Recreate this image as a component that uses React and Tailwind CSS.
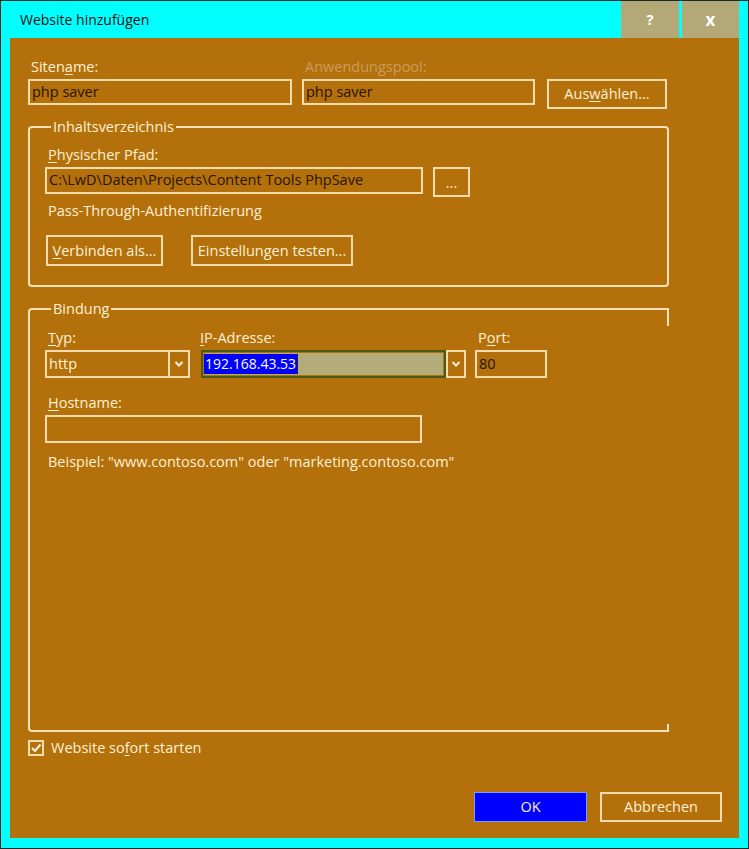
import React from "react";

const font = { fontFamily: '"Open Sans", "Noto Sans", sans-serif' };

function Label({ children, color = "text-[#fff1d6]", className = "" }) {
  return <div className={`h-[21px] pl-[3px] text-[14.5px] leading-[18px] ${color} ${className}`}>{children}</div>;
}

function Input({ value, className = "" }) {
  return (
    <div className={`border-2 border-[#f3dcae] px-[2px] text-[14.5px] leading-[22px] text-[#2a1400] ${className}`}>
      {value}
    </div>
  );
}

function Button({ children, className = "" }) {
  return (
    <div className={`flex items-center justify-center border-2 border-[#f3dcae] text-[14.5px] text-[#fff1d6] ${className}`}>
      {children}
    </div>
  );
}

function Chevron() {
  return (
    <svg width="10" height="8" viewBox="0 0 10 8">
      <polyline points="1.5,2 5,5.5 8.5,2" fill="none" stroke="#fff1d6" strokeWidth="2" />
    </svg>
  );
}

export default function App() {
  return (
    <div style={font} className="w-[749px] h-[849px] border border-[#1e2a2a] bg-[#00ffff] flex flex-col">
      {/* Title bar */}
      <div className="h-[37px] flex items-start justify-between">
        <div className="pl-[19px] pt-[8px] text-[14px] text-[#111]">Website hinzufügen</div>
        <div className="flex gap-[3px] pr-[9px]">
          <div className="w-[58px] h-[37px] bg-[#b3a876] flex items-center justify-center text-white text-[15px] font-bold">?</div>
          <div className="w-[57px] h-[37px] bg-[#b3a876] flex items-center justify-center text-white text-[17px] font-bold">x</div>
        </div>
      </div>

      {/* Content */}
      <div className="mx-[9px] mb-[10px] flex-1 bg-[#b4700a] pl-[18px] pt-[20px] flex flex-col">
        {/* Site name row */}
        <div className="flex items-start">
          <div className="w-[264px]">
            <Label>
              Siten<span className="underline underline-offset-2">a</span>me:
            </Label>
            <Input value="php saver" className="h-[26px]" />
          </div>
          <div className="w-[233px] ml-[10px]">
            <Label color="text-[#c99d5e]">Anwendungspool:</Label>
            <Input value="php saver" className="h-[26px]" />
          </div>
          <Button className="ml-[12px] mt-[21px] w-[120px] h-[30px]">
            Aus<span className="underline underline-offset-2">w</span>ählen...
          </Button>
        </div>

        {/* Inhaltsverzeichnis */}
        <fieldset className="mt-[10px] w-[641px] h-[168px] border-2 border-[#f6e2b8] rounded-[4px] pl-[15px]">
          <legend className="ml-[6px] px-[2px] text-[14.5px] leading-[16px] text-[#fff1d6]">Inhaltsverzeichnis</legend>
          <div className="mt-[11px]">
            <Label>
              <span className="underline underline-offset-2">P</span>hysischer Pfad:
            </Label>
          </div>
          <div className="flex items-start">
            <Input value="C:\LwD\Daten\Projects\Content Tools PhpSave" className="w-[378px] h-[27px] border-[#e8d3a2]" />
            <Button className="ml-[10px] w-[37px] h-[30px] text-[10px] leading-none pt-[3px]">...</Button>
          </div>
          <div className="mt-[5px] pl-[3px] h-[24px] text-[14.5px] leading-[18px] text-[#fff1d6]">Pass-Through-Authentifizierung</div>
          <div className="flex mt-[9px] pl-[1px]">
            <Button className="w-[117px] h-[31px]">
              <span className="underline underline-offset-2">V</span>erbinden als...
            </Button>
            <Button className="ml-[28px] w-[162px] h-[31px]">
              Einstellun<span className="underline underline-offset-2">g</span>en testen...
            </Button>
          </div>
        </fieldset>

        {/* Bindung */}
        <div className="relative mt-[14px] w-[641px]">
          <fieldset className="h-[431px] border-2 border-r-0 border-[#f6e2b8] rounded-l-[4px] pl-[15px]">
            <legend className="ml-[6px] px-[2px] text-[14.5px] leading-[16px] text-[#fff1d6]">Bindung</legend>
            <div className="mt-[12px] flex items-start">
              <div className="w-[145px]">
                <Label>
                  <span className="underline underline-offset-2">T</span>yp:
                </Label>
                <div className="flex h-[28px] border-2 border-[#f3dcae]">
                  <div className="flex-1 px-[2px] text-[14.5px] leading-[24px] text-[#fff1d6]">http</div>
                  <div className="w-[20px] border-l-2 border-[#f3dcae] flex items-center justify-center">
                    <Chevron />
                  </div>
                </div>
              </div>
              <div className="ml-[11px] w-[265px]">
                <Label className="-ml-[4px]">
                  <span className="underline underline-offset-2">I</span>P-Adresse:
                </Label>
                <div className="flex h-[28px]">
                  <div className="flex-1 border-2 border-[#4a5a12] p-[1px] flex">
                    <div className="flex-1 bg-[#b3ac78] flex items-center">
                      <span className="bg-[#0000ff] text-white text-[14px] leading-[20px] pl-[1px] pr-[1px]">192.168.43.53</span>
                      <span className="w-[1px] h-[20px] bg-[#222]"></span>
                    </div>
                  </div>
                  <div className="w-[20px] border-2 border-[#f3dcae] flex items-center justify-center">
                    <Chevron />
                  </div>
                </div>
              </div>
              <div className="ml-[9px] w-[72px]">
                <Label>
                  P<span className="underline underline-offset-2">o</span>rt:
                </Label>
                <Input value="80" className="h-[28px] leading-[24px]" />
              </div>
            </div>
            <div className="mt-[16px]">
              <Label>
                <span className="underline underline-offset-2">H</span>ostname:
              </Label>
              <Input value="" className="w-[377px] h-[28px]" />
            </div>
            <div className="mt-[10px] pl-[3px] text-[14.5px] leading-[18px] text-[#fff1d6]">
              Beispiel: "www.contoso.com" oder "marketing.contoso.com"
            </div>
          </fieldset>
          {/* partial right edge of the group border */}
          <div className="absolute right-0 top-[7px] w-[2px] h-[18px] bg-[#f6e2b8]"></div>
          <div className="absolute right-0 bottom-0 w-[2px] h-[8px] bg-[#f6e2b8]"></div>
        </div>

        {/* Checkbox */}
        <div className="mt-[7px] flex items-center">
          <div className="w-[16px] h-[16px] border-2 border-[#f3dcae] flex items-center justify-center">
            <svg width="12" height="12" viewBox="0 0 12 12">
              <polyline points="2,6 5,9 10.5,2.5" fill="none" stroke="#fff1d6" strokeWidth="2.2" />
            </svg>
          </div>
          <div className="ml-[7px] text-[14.5px] leading-[18px] text-[#fff1d6]">
            Website so<span className="underline underline-offset-2">f</span>ort starten
          </div>
        </div>

        {/* Footer buttons */}
        <div className="mt-[35px] flex justify-end pr-[17px]">
          <div className="w-[113px] h-[30px] bg-[#0000ff] border border-[#6fa0ff] flex items-center justify-center text-[14.5px] text-[#fff1d6]">
            OK
          </div>
          <Button className="ml-[13px] w-[122px] h-[30px]">Abbrechen</Button>
        </div>
      </div>
    </div>
  );
}
